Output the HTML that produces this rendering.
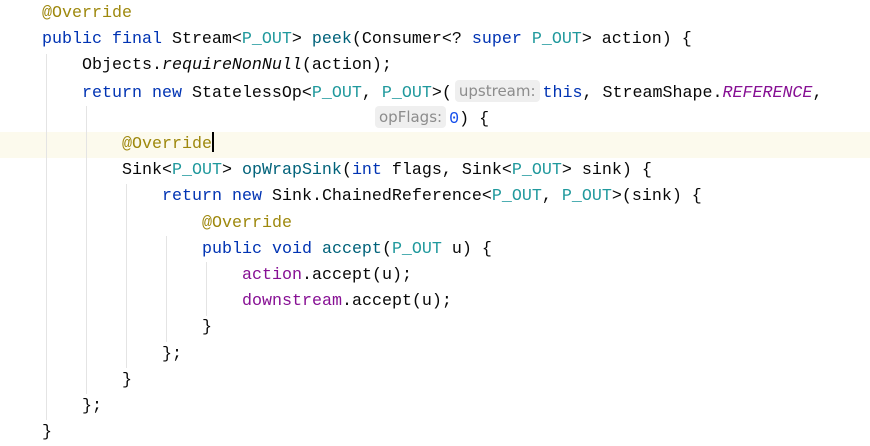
<!DOCTYPE html>
<html><head><meta charset="utf-8"><style>
html,body{margin:0;padding:0;background:#fff;width:870px;height:446px;overflow:hidden;}
#c{position:relative;width:870px;height:446px;font-family:"Liberation Mono",monospace;font-size:16.67px;color:#080808;}
.l{position:absolute;left:0;height:26.2px;line-height:26.2px;white-space:pre;}
.hl{position:absolute;left:0;width:870px;height:26.2px;background:#fcfaed;}
.g{position:absolute;width:1px;background:#e4e4e4;}
.k{color:#0033b3}.a{color:#9e880d}.t{color:#20999d}.m{color:#00627a}.i{font-style:italic}
.f{color:#871094}.p{color:#871094;font-style:italic}.n{color:#1750eb}
.h{display:inline-block;font-family:"DejaVu Sans","Liberation Sans",sans-serif;font-size:15px;color:#8c8c8c;background:#efefef;border-radius:4px;line-height:22px;height:22px;padding:0 4px;vertical-align:1px;margin:0 3px;}
.cur{display:inline-block;width:2px;height:20px;background:#000;vertical-align:-4px;}
</style></head><body><div id="c">
<div class="hl" style="top:132px"></div>
<div class="g" style="left:46px;top:54px;height:366px"></div>
<div class="g" style="left:86px;top:106px;height:288px"></div>
<div class="g" style="left:126px;top:184px;height:184px"></div>
<div class="g" style="left:166px;top:236px;height:106px"></div>
<div class="g" style="left:206px;top:262px;height:54px"></div>
<div class="l" style="top:1px;left:42px"><span class="a">@Override</span></div>
<div class="l" style="top:27.2px;left:42px"><span class="k">public final</span> Stream&lt;<span class="t">P_OUT</span>&gt; <span class="m">peek</span>(Consumer&lt;? <span class="k">super</span> <span class="t">P_OUT</span>&gt; action) {</div>
<div class="l" style="top:53.4px;left:82px">Objects.<span class="i">requireNonNull</span>(action);</div>
<div class="l" style="top:79.6px;left:82px"><span class="k">return new</span> StatelessOp&lt;<span class="t">P_OUT</span>, <span class="t">P_OUT</span>&gt;(<span class="h">upstream:</span><span class="k">this</span>, StreamShape.<span class="p">REFERENCE</span>,</div>
<div class="l" style="top:105.8px;left:372px"><span class="h">opFlags:</span><span class="n">0</span>) {</div>
<div class="l" style="top:132px;left:122px"><span class="a">@Override</span><span class="cur"></span></div>
<div class="l" style="top:158.2px;left:122px">Sink&lt;<span class="t">P_OUT</span>&gt; <span class="m">opWrapSink</span>(<span class="k">int</span> flags, Sink&lt;<span class="t">P_OUT</span>&gt; sink) {</div>
<div class="l" style="top:184.4px;left:162px"><span class="k">return new</span> Sink.ChainedReference&lt;<span class="t">P_OUT</span>, <span class="t">P_OUT</span>&gt;(sink) {</div>
<div class="l" style="top:210.6px;left:202px"><span class="a">@Override</span></div>
<div class="l" style="top:236.8px;left:202px"><span class="k">public void</span> <span class="m">accept</span>(<span class="t">P_OUT</span> u) {</div>
<div class="l" style="top:263px;left:242px"><span class="f">action</span>.accept(u);</div>
<div class="l" style="top:289.2px;left:242px"><span class="f">downstream</span>.accept(u);</div>
<div class="l" style="top:315.4px;left:202px">}</div>
<div class="l" style="top:341.6px;left:162px">};</div>
<div class="l" style="top:367.8px;left:122px">}</div>
<div class="l" style="top:394px;left:82px">};</div>
<div class="l" style="top:420.2px;left:42px">}</div>
</div></body></html>
